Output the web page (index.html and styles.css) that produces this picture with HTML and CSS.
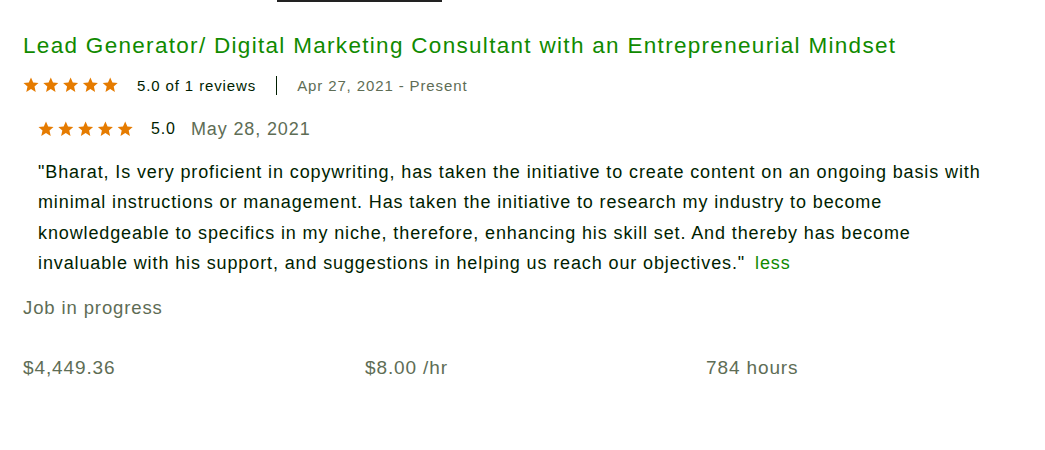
FILE: index.html
```html
<!DOCTYPE html>
<html lang="en">
<head>
<meta charset="utf-8">
<title>Work history</title>
<link rel="stylesheet" href="styles.css">
</head>
<body>
<div class="page">
  <div class="tab-line"></div>
  <section class="job">
    <h4 class="job-title">Lead Generator/ Digital Marketing Consultant with an Entrepreneurial Mindset</h4>
    <div class="meta">
      <span class="stars">
        <svg viewBox="0 0 100 16" width="100" height="16" aria-hidden="true">
          <defs><path id="st" d="M8 0.6l2.2 4.9 5.3 0.5-4 3.6 1.2 5.3L8 12.1l-4.7 2.8 1.2-5.3-4-3.6 5.3-0.5z"/></defs>
          <use href="#st" x="0"/><use href="#st" x="19.8"/><use href="#st" x="39.6"/><use href="#st" x="59.4"/><use href="#st" x="79.2"/>
        </svg>
      </span>
      <span class="rating">5.0 of 1 reviews</span>
      <span class="divider"></span>
      <span class="dates">Apr 27, 2021 - Present</span>
    </div>
    <div class="feedback">
      <div class="meta meta-small">
        <span class="stars">
          <svg viewBox="0 0 100 16" width="100" height="16" aria-hidden="true">
            <use href="#st" x="0"/><use href="#st" x="19.8"/><use href="#st" x="39.6"/><use href="#st" x="59.4"/><use href="#st" x="79.2"/>
          </svg>
        </span>
        <span class="rating">5.0</span>
        <span class="fb-date">May 28, 2021</span>
      </div>
      <p class="comment"><span class="comment-text">"Bharat, Is very proficient in copywriting, has taken the initiative to create content on an ongoing basis with minimal instructions or management. Has taken the initiative to research my industry to become knowledgeable to specifics in my niche, therefore, enhancing his skill set. And thereby has become invaluable with his support, and suggestions in helping us reach our objectives."</span><a class="less" href="#">less</a></p>
    </div>
    <div class="status">Job in progress</div>
    <div class="stats">
      <span>$4,449.36</span>
      <span>$8.00 /hr</span>
      <span>784 hours</span>
    </div>
  </section>
</div>
</body>
</html>
```

FILE: styles.css
```css
* { box-sizing: border-box; }
html, body { margin: 0; padding: 0; background: #fff; }
body {
  font-family: "Liberation Sans", Arial, sans-serif;
  letter-spacing: 0.055em;
  color: #001e00;
  width: 1045px;
  height: 450px;
  overflow: hidden;
}
.page { position: relative; padding: 0 0 0 23px; }
.tab-line {
  position: absolute;
  left: 277px;
  top: 0;
  width: 165px;
  height: 2px;
  background: #222;
}
.job { padding-top: 31px; }
.job-title {
  margin: 0;
  font-size: 22.5px;
  font-weight: 400;
  line-height: 30px;
  letter-spacing: 0.058em;
  color: #108a00;
}
.meta {
  display: flex;
  align-items: center;
  height: 24px;
  margin-top: 12px;
  font-size: 15px;
}
.stars { display: flex; fill: #e57b00; }
.stars svg { display: block; }
.rating { margin-left: 14px; color: #001e00; }
.divider {
  width: 1px;
  height: 19px;
  background: #001e00;
  margin: 0 20px 0 20px;
}
.dates { color: #5e6d55; }
.feedback { padding-left: 15px; }
.meta-small { margin-top: 20px; font-size: 16px; }
.meta-small .rating { margin-left: 13px; }
.fb-date { margin-left: 15px; font-size: 18px; color: #5e6d55; }
.comment {
  margin: 16px 0 0;
  width: 962px;
  font-size: 18px;
  line-height: 30.3px;
  color: #001e00;
}
.less {
  display: inline-block;
  color: #108a00;
  text-decoration: none;
  margin-left: 10px;
}
.status {
  margin-top: 15px;
  font-size: 18.5px;
  line-height: 30px;
  color: #5e6d55;
}
.stats {
  display: grid;
  grid-template-columns: 342px 341px 341px;
  margin-top: 30px;
  font-size: 19px;
  line-height: 30px;
  color: #5e6d55;
}
```
